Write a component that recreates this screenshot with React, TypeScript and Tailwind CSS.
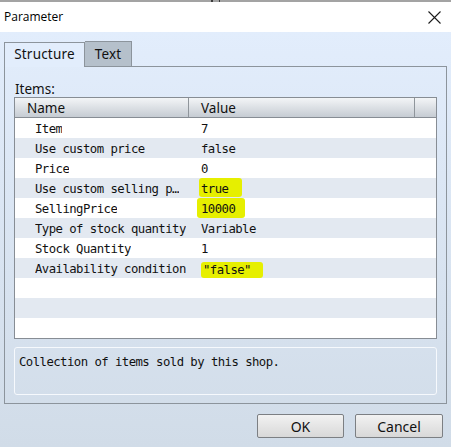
const mono = "font-['DejaVu_Sans_Mono',monospace] text-[12.3px] tracking-[-0.55px]";
const ui = "font-['Noto_Sans',sans-serif]";

type Row = { name: string; value: string; mark?: 'a' | 'b' | 'c' };

const rows: Row[] = [
  { name: 'Item', value: '7' },
  { name: 'Use custom price', value: 'false' },
  { name: 'Price', value: '0' },
  { name: 'Use custom selling p…', value: 'true', mark: 'a' },
  { name: 'SellingPrice', value: '10000', mark: 'b' },
  { name: 'Type of stock quantity', value: 'Variable' },
  { name: 'Stock Quantity', value: '1' },
  { name: 'Availability condition', value: '"false"', mark: 'c' },
  { name: '', value: '' },
  { name: '', value: '' },
  { name: '', value: '' },
];

function Value({ row }: { row: Row }) {
  if (row.mark === 'a')
    return (
      <span className="-ml-[2px] mb-px flex items-center rounded-[3px] bg-[#e6ef00] pl-[2px] pr-[14px] pt-[3px]">
        {row.value}
      </span>
    );
  if (row.mark === 'b')
    return (
      <span className="-ml-[4px] flex items-center rounded-[3px] bg-[#e6ef00] pl-[4px] pr-[10px] pt-[2px]">
        {row.value}
      </span>
    );
  if (row.mark === 'c')
    return (
      <span className="mt-[4px] flex items-center rounded-[3px] bg-[#e6ef00] pl-[2px] pr-[12px]">
        {row.value}
      </span>
    );
  return <span className="flex items-center pt-[2px]">{row.value}</span>;
}

function CloseIcon() {
  return (
    <svg width="13" height="13" viewBox="0 0 13 13" className="text-[#1b1b1b]">
      <path d="M0.5 0.5 L12.5 12.5 M12.5 0.5 L0.5 12.5" stroke="currentColor" strokeWidth="1.1" fill="none" />
    </svg>
  );
}

export default function App() {
  return (
    <div className="flex h-[447px] w-[451px] flex-col overflow-hidden bg-white text-[#111]">
      {/* edge of the window behind */}
      <div className="flex h-[2px] bg-[#a3a3a3]">
        <div className="ml-[211px] w-[2px] bg-[#3c3c3c]" />
        <div className="ml-[6px] w-[1px] bg-[#3c3c3c]" />
      </div>

      {/* title bar */}
      <div className="flex h-[30px] items-center justify-between bg-white pl-[4px] pr-[10px]">
        <span className="font-['Open_Sans',sans-serif] text-[12px] text-black">Parameter</span>
        <CloseIcon />
      </div>

      <div className="flex flex-1 flex-col bg-gradient-to-b from-[#e2edfc] to-[#d1dce8] px-[4px] pt-[9px]">
        {/* tabs */}
        <div className={`flex h-[25px] items-end ${ui} text-[13.5px] tracking-[0.2px]`}>
          <div className="relative z-10 -mb-px flex h-[25px] w-[81px] items-center justify-center border border-b-0 border-[#8c949c] bg-[#e2edfc] pb-[1px]">
            Structure
          </div>
          <div className="flex h-[25px] w-[47px] items-center justify-center self-start border border-l-0 border-b-0 border-[#8c949c] bg-[#b5c0cb]">
            Text
          </div>
        </div>

        {/* tab panel */}
        <div className="flex flex-col border border-[#8c949c] px-[9px] pb-[8px] pt-[14px]">
          <div className={`${ui} h-[16px] pl-px text-[13.5px] leading-[16px]`}>Items:</div>

          <div className="border border-[#878d94] bg-white">
            <div className={`flex h-[20px] border-b border-[#878d94] bg-gradient-to-b from-[#f3f5f7] to-[#c6ccd3] ${ui} text-[13.5px]`}>
              <div className="flex w-[174px] items-center border-r border-[#8f959b] pl-[12px] pt-px">Name</div>
              <div className="flex w-[226px] items-center border-r border-[#8f959b] pl-[12px] pt-px">Value</div>
              <div className="flex-1" />
            </div>
            {rows.map((row, i) => (
              <div key={i} className={`flex h-[20px] ${mono} ${i % 2 === 1 ? 'bg-[#e3e9f1]' : 'bg-white'}`}>
                <div className="flex w-[175px] items-center pl-[20px] pt-[2px]">
                  <span className="truncate">{row.name}</span>
                </div>
                <div className="flex h-full flex-1 pl-[11px]">
                  <Value row={row} />
                </div>
              </div>
            ))}
          </div>

          {/* description */}
          <div className={`mt-[8px] h-[48px] rounded-[3px] border border-[#f6f9fd] px-[4px] pt-[5px] leading-[18px] ${mono}`}>
            Collection of items sold by this shop.
          </div>
        </div>

        {/* dialog buttons */}
        <div className={`mt-[10px] flex justify-end gap-[11px] pr-[4px] ${ui} text-[14px]`}>
          <button className="flex h-[24px] w-[87px] items-center justify-center rounded-[2px] border border-[#7c7f83] bg-gradient-to-b from-[#f2f2f2] to-[#d8d8d8]">
            OK
          </button>
          <button className="flex h-[24px] w-[88px] items-center justify-center rounded-[2px] border border-[#7c7f83] bg-gradient-to-b from-[#f2f2f2] to-[#d8d8d8]">
            Cancel
          </button>
        </div>
      </div>
    </div>
  );
}
